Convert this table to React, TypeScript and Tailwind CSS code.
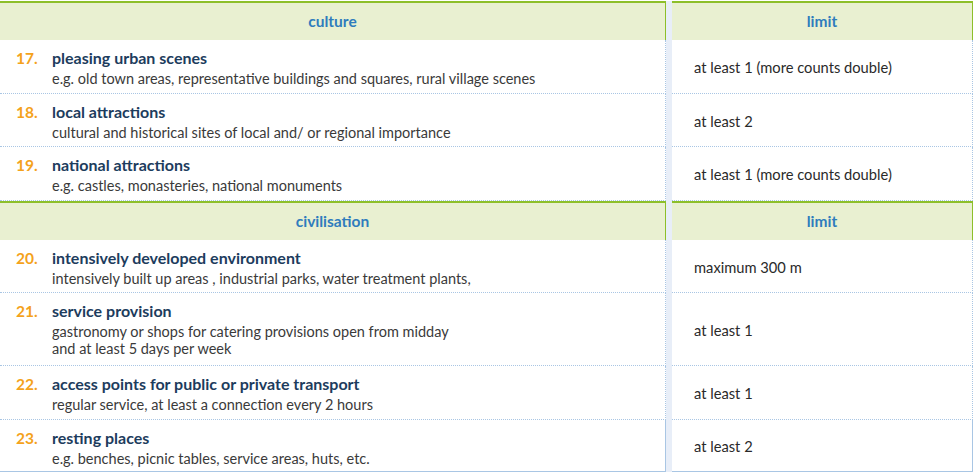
const rows1 = [
  { n: "17.", title: "pleasing urban scenes", lines: ["e.g. old town areas, representative buildings and squares, rural village scenes"], limit: "at least 1 (more counts double)", h: "h-[54px]" },
  { n: "18.", title: "local attractions", lines: ["cultural and historical sites of local and/ or regional importance"], limit: "at least 2", h: "h-[53px]" },
  { n: "19.", title: "national attractions", lines: ["e.g. castles, monasteries, national monuments"], limit: "at least 1 (more counts double)", h: "h-[54px]" },
];

const rows2 = [
  { n: "20.", title: "intensively developed environment", lines: ["intensively built up areas , industrial parks, water treatment plants,"], limit: "maximum 300 m", h: "h-[53px]" },
  { n: "21.", title: "service provision", lines: ["gastronomy or shops for catering provisions open from midday", "and at least 5 days per week"], limit: "at least 1", h: "h-[73px]" },
  { n: "22.", title: "access points for public or private transport", lines: ["regular service, at least a connection every 2 hours"], limit: "at least 1", h: "h-[54px]" },
  { n: "23.", title: "resting places", lines: ["e.g. benches, picnic tables, service areas, huts, etc."], limit: "at least 2", h: "h-[52px]" },
];

type Row = { n: string; title: string; lines: string[]; limit: string; h: string };

function Header({ label }: { label: string }) {
  return (
    <div className="flex h-[39px]">
      <div className="w-[666px] bg-[#e9f0d1] border-t-2 border-r border-[#8dbf2a] flex items-center justify-center text-[15.5px] font-bold text-[#2f7cbd]">
        {label}
      </div>
      <div className="w-[6px] bg-[#e8eef8]" />
      <div className="w-[301px] bg-[#e9f0d1] border-t-2 border-r border-[#8dbf2a] flex items-center justify-center text-[15.5px] font-bold text-[#2f7cbd]">
        limit
      </div>
    </div>
  );
}

function Item({ row, last }: { row: Row; last: boolean }) {
  const bottom = last ? "border-b border-solid border-[#a9c6e4]" : "border-b border-dotted border-[#8fb4dd]";
  return (
    <div className={`flex ${row.h}`}>
      <div className={`w-[666px] flex pl-[16px] pt-[7px] border-r border-[#a9c6e4] ${bottom}`}>
        <div className="w-[36px] text-[15.5px] font-bold text-[#f4a21c] leading-[22px]">{row.n}</div>
        <div>
          <div className="text-[16px] font-bold text-[#1d3c5d] leading-[22px]">{row.title}</div>
          <div className="mt-[1px] text-[14.5px] text-[#3a3a3a] leading-[17px]">
            {row.lines.map((l) => (
              <div key={l}>{l}</div>
            ))}
          </div>
        </div>
      </div>
      <div className="w-[6px] bg-[#e8eef8]" />
      <div className={`w-[301px] flex items-center pl-[22px] pt-[2px] text-[14.7px] text-[#2a2a2a] border-r border-[#a9c6e4] ${bottom}`}>
        {row.limit}
      </div>
    </div>
  );
}

export default function App() {
  return (
    <div className="w-[975px] h-[475px] bg-white pt-[1px]" style={{ fontFamily: "Lato, 'Open Sans', sans-serif" }}>
      <Header label="culture" />
      {rows1.map((r) => (
        <Item key={r.n} row={r} last={false} />
      ))}
      <Header label="civilisation" />
      {rows2.map((r, i) => (
        <Item key={r.n} row={r} last={i === rows2.length - 1} />
      ))}
    </div>
  );
}
